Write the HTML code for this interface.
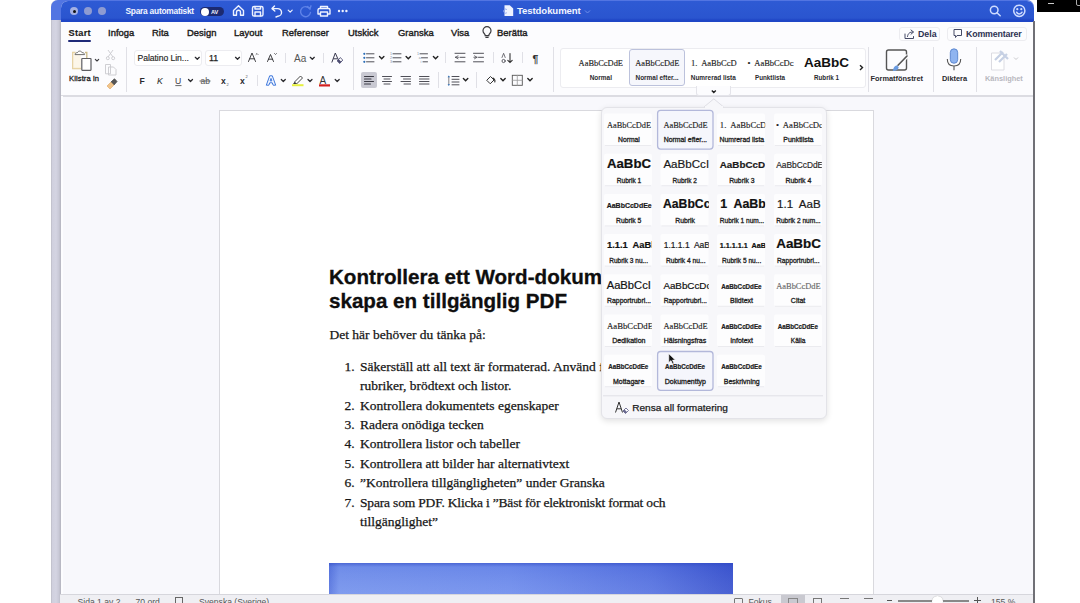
<!DOCTYPE html>
<html><head><meta charset="utf-8">
<style>
*{margin:0;padding:0;box-sizing:border-box}
html,body{width:1080px;height:603px;overflow:hidden;background:#fff;font-family:"Liberation Sans",sans-serif;position:relative}
.a{position:absolute}
svg{position:absolute;overflow:visible}
.tab{position:absolute;top:27.3px;font-size:9.4px;font-weight:normal;color:#1c1c20;-webkit-text-stroke:0.4px #1c1c20;letter-spacing:0.05px;white-space:nowrap}
.tl{position:absolute;width:8px;height:8px;border-radius:50%;background:#a4b0e3;top:7px}
.wt{color:#f2f5ff;font-weight:bold;position:absolute;white-space:nowrap}
.sep{position:absolute;width:1px;background:#e0e0e6}
.t{position:absolute;white-space:nowrap}
</style></head>
<body>
<!-- back window strip -->
<div class="a" style="left:51px;top:0;width:10px;height:603px;background:linear-gradient(90deg,#bcbcc6 0,#d0d0de 1.5px,#d4d4e2 5px,#c8c8d6 8px,#b4b4be 10px);border-radius:6px 0 0 0"></div>
<div class="a" style="left:51px;top:0;width:983px;height:20px;background:#5275e2;border-radius:7px 7px 0 0"></div>

<!-- black bar -->
<div class="a" style="left:1037px;top:0;width:43px;height:12px;background:#000">
  <div class="a" style="left:11px;top:3px;width:6px;height:1px;background:#ccc"></div>
  <div class="a" style="left:38.5px;top:-2px;width:8px;height:8px;border:1px solid #aaa;border-radius:2px"></div>
</div>
<!-- main window bg -->
<div class="a" style="left:61px;top:1px;width:973px;height:602px;background:#f8f8fc;border-radius:7px 7px 0 0;overflow:hidden">
  <div class="a" style="left:0;top:0;width:974px;height:21px;background:linear-gradient(180deg,#2e5ad4 0,#2a55cf 17px,#1f46c6 19px,#1f46c6 21px)"></div>
  <div class="a" style="left:0;top:20.5px;width:974px;height:75.5px;background:#fcfcfe;border-bottom:2px solid #dcdce2"></div>
</div>
<div class="a" style="left:1033px;top:21px;width:2px;height:582px;background:#707076"></div>
<div class="a" style="left:61px;top:96px;width:2px;height:507px;background:#fdfdff"></div>

<!-- title bar -->
<div class="tl" style="left:70px;"><div class="a" style="left:2.5px;top:2.5px;width:3px;height:3px;border-radius:50%;background:#111"></div></div>
<div class="tl" style="left:84px;background:#8e9bd2"></div>
<div class="tl" style="left:98px;background:#8e9bd2"></div>
<div class="wt" style="left:125.5px;top:5.5px;font-size:8.4px;letter-spacing:-0.25px">Spara automatiskt</div>
<div class="a" style="left:200px;top:7px;width:24px;height:9px;border-radius:4.5px;background:#1c2a70"></div>
<div class="a" style="left:200.5px;top:7.5px;width:8px;height:8px;border-radius:50%;background:#fff"></div>
<div class="wt" style="left:211px;top:9px;font-size:5.6px">AV</div>
<svg width="1080" height="22" style="left:0;top:0" viewBox="0 0 1080 22">
 <g fill="none" stroke="#eef2ff" stroke-width="1.4" stroke-linecap="round" stroke-linejoin="round">
  <!-- home -->
  <path d="M233.5 10.5 L238.5 5.8 L243.5 10.5 V15.2 H240.5 V12.2 A2 2 0 0 0 236.5 12.2 V15.2 H233.5 Z"/>
  <!-- save -->
  <rect x="252.5" y="6.5" width="10.5" height="9.5" rx="1.6"/>
  <path d="M255 6.8 V9 H260.5 V6.8 M255 15.8 V12 H260.5 V15.8"/>
  <!-- undo -->
  <path d="M274.5 6 L272 8.6 L274.8 11 M272.3 8.6 H277.5 A3.8 3.8 0 0 1 278 16.2 L276 17"/>
  <path d="M288.2 10.2 L290.2 12.2 L292.2 10.2" stroke-width="1.2"/>
  <!-- print -->
  <path d="M320.5 8.5 V6.5 H327.5 V8.5 M319.8 14 H318 V9.8 A1.5 1.5 0 0 1 319.5 8.5 H328.5 A1.5 1.5 0 0 1 330 10 V14 H328.2 M320.5 12 H327.5 V16 H320.5 Z"/>
 </g>
 <!-- redo faded -->
 <g fill="none" stroke="#5e82e8" stroke-width="1.4" stroke-linecap="round">
  <path d="M309.8 9 A5 5 0 1 0 310.5 12.5"/>
  <path d="M307.5 6.5 L310 8.8 L311 5.8"/>
 </g>
 <g fill="#eef2ff">
  <circle cx="339" cy="11" r="1.2"/><circle cx="342.7" cy="11" r="1.2"/><circle cx="346.4" cy="11" r="1.2"/>
 </g>
 <!-- doc icon -->
 <path d="M504.5 5.2 H509.8 L513.2 8.6 V16 H504.5 Z" fill="#eef2ff"/>
 <path d="M506.8 9.5 A2 2 0 1 0 506.8 12.8" fill="none" stroke="#8ea6ef" stroke-width="1"/>
 <path d="M585 10.5 L587.5 13 L590 10.5" fill="none" stroke="#6f8fea" stroke-width="1"/>
 <!-- search -->
 <g fill="none" stroke="#cfdcff" stroke-width="1.5" stroke-linecap="round">
  <circle cx="994.2" cy="10" r="3.8"/>
  <path d="M997 12.8 L1000.2 15.8"/>
  <circle cx="1019.3" cy="10.8" r="5.6"/>
  <path d="M1016.6 12.2 A3 3 0 0 0 1022 12.2"/>
 </g>
 <circle cx="1017.3" cy="9.2" r="1.1" fill="#cfdcff"/><circle cx="1021.3" cy="9.2" r="1.1" fill="#cfdcff"/>
</svg>
<div class="wt" style="left:517px;top:5px;font-size:9.6px;letter-spacing:-0.1px">Testdokument</div>

<!-- tabs -->
<div class="tab" style="left:68.5px;top:27.5px;font-size:9.2px;font-weight:bold;-webkit-text-stroke:0.15px #1c1c20;letter-spacing:0.3px">Start</div>
<div class="a" style="left:68px;top:40px;width:23px;height:2px;background:#1f2a78;border-radius:1px"></div>
<div class="tab" style="left:108px">Infoga</div>
<div class="tab" style="left:152px">Rita</div>
<div class="tab" style="left:187px">Design</div>
<div class="tab" style="left:234px">Layout</div>
<div class="tab" style="left:282px">Referenser</div>
<div class="tab" style="left:348px">Utskick</div>
<div class="tab" style="left:398px">Granska</div>
<div class="tab" style="left:451px">Visa</div>
<div class="tab" style="left:497px">Berätta</div>
<svg width="12" height="14" style="left:481px;top:25px" viewBox="0 0 12 14"><path d="M3.2 8.5 A4 4 0 1 1 8.8 8.5 C8 9.3 7.8 10 7.8 10.6 H4.2 C4.2 10 4 9.3 3.2 8.5 Z M4.4 12.3 H7.6" fill="none" stroke="#3a3a3e" stroke-width="1.2"/></svg>

<!-- Dela / Kommentarer -->
<div class="a" style="left:899px;top:27px;width:41px;height:14px;border:1px solid #ececf0;border-radius:3px"></div>
<svg width="12" height="12" style="left:904px;top:28px" viewBox="0 0 12 12"><path d="M1 6 V10.5 H9.5 V8.5 M3.5 8.5 C4 5 6 4 9 4 M7 2 L9.5 4 L7 6.2" fill="none" stroke="#454a66" stroke-width="1" stroke-linecap="round" stroke-linejoin="round"/></svg>
<div class="t" style="left:918px;top:29px;font-size:8.8px;font-weight:bold;color:#2d3252">Dela</div>
<div class="a" style="left:947px;top:27px;width:80px;height:14px;border:1px solid #ececf0;border-radius:3px"></div>
<svg width="12" height="12" style="left:953px;top:28px" viewBox="0 0 12 12"><path d="M1 1.5 H8.5 V7.5 H4 L2.5 9.5 V7.5 H1 Z" fill="none" stroke="#454a66" stroke-width="1" stroke-linejoin="round"/></svg>
<div class="t" style="left:966px;top:29px;font-size:8.8px;font-weight:bold;color:#2d3252;letter-spacing:-0.15px">Kommentarer</div>
<!-- ribbon separators -->
<div class="sep" style="left:126px;top:47px;height:45px"></div>
<div class="sep" style="left:353px;top:47px;height:43px"></div>
<div class="sep" style="left:553px;top:47px;height:45px"></div>
<div class="sep" style="left:285px;top:53px;height:10px"></div>
<div class="sep" style="left:323px;top:53px;height:10px"></div>
<div class="sep" style="left:257px;top:75px;height:11px"></div>
<div class="sep" style="left:445px;top:52px;height:11px"></div>
<div class="sep" style="left:493px;top:52px;height:11px"></div>
<div class="sep" style="left:522px;top:52px;height:11px"></div>
<div class="sep" style="left:438px;top:72px;height:16px"></div>
<div class="sep" style="left:476px;top:72px;height:16px"></div>

<div class="t" style="left:69px;top:74px;font-size:7.6px;color:#1e1e22;-webkit-text-stroke:0.3px #1e1e22;letter-spacing:0.1px">Klistra in</div>

<!-- font boxes -->
<div class="a" style="left:134px;top:50px;width:68px;height:16px;background:#fff;border:1px solid #ececf0;border-radius:3px"></div>
<div class="t" style="left:137.5px;top:53px;font-size:8.6px;color:#1e1e22;letter-spacing:-0.05px;-webkit-text-stroke:0.15px #1e1e22">Palatino Lin...</div>
<div class="a" style="left:205px;top:50px;width:37px;height:16px;background:#fff;border:1px solid #ececf0;border-radius:3px"></div>
<div class="t" style="left:209px;top:53px;font-size:8.8px;color:#1e1e22;-webkit-text-stroke:0.25px #1e1e22">11</div>

<div class="a" style="left:361px;top:72px;width:16px;height:16px;background:#c9c9d2;border-radius:2px"></div>

<svg width="1080" height="100" style="left:0;top:0" viewBox="0 0 1080 100">
 <!-- clipboard -->
 <path d="M75.5 52.5 H72.8 V68.5 H81" fill="none" stroke="#e0c890" stroke-width="1.3"/>
 <path d="M85 52.5 H86.8 V58" fill="none" stroke="#cbb985" stroke-width="1.3"/>
 <rect x="72.8" y="52.5" width="8" height="16" fill="#fbf2da" opacity="0.6"/>
 <path d="M75 54.6 C75 53 76.5 52.6 77.5 52.6 C78 50.6 81.5 50.6 82 52.6 C83 52.6 84.6 53 84.6 54.6 Z" fill="#fff" stroke="#707070" stroke-width="1"/>
 <rect x="81.8" y="58.5" width="9.2" height="11.8" fill="#fff" stroke="#5e5e62" stroke-width="1.2" rx="0.5"/>
 <g fill="none" stroke="#3a3a3e" stroke-width="1.1" stroke-linecap="round" stroke-linejoin="round">
  <path d="M95.3 59.3 L97 61 L98.7 59.3"/>
  <path d="M138 79 V82 M138 83 V83" stroke="none"/>
 </g>
 <!-- scissors disabled -->
 <g fill="none" stroke="#c9c9ce" stroke-width="0.9">
  <path d="M108 50 L113 57 M113 50 L108 57"/>
  <circle cx="107.8" cy="58.2" r="1.5"/><circle cx="113.2" cy="58.2" r="1.5"/>
  <path d="M105.5 64.5 H110.5 V73.8 H105.5 Z M108.5 67 H113.5 L116 69.5 V75 H108.5 Z" fill="#fcfcfe"/>
 </g>
 <!-- format painter -->
 <path d="M107 86 L111 82 L114 85 L110 89 Z" fill="#f0c48a" stroke="#e6b47a" stroke-width="0.8"/>
 <path d="M111 82 L114.5 78.8 L117 81.5 L114 85" fill="#555" stroke="#444" stroke-width="0.8"/>

 <g fill="none" stroke="#2a2a2e" stroke-width="1.25" stroke-linecap="round" stroke-linejoin="round">
  <!-- font chevrons -->
  <path d="M195.3 57.3 L197.3 59.3 L199.3 57.3"/>
  <path d="M235.5 57.3 L237.5 59.3 L239.5 57.3"/>
  <path d="M310.3 57.3 L312.3 59.3 L314.3 57.3"/>
  <!-- grow/shrink -->
  <path d="M248.5 61.5 L252 53 L255.5 61.5 M249.7 58.8 H254.3" stroke-width="0.9"/>
  <path d="M256 54.5 L257 53.5 L258 54.5" stroke-width="0.7"/>
  <path d="M267.5 61.5 L270.5 54.5 L273.5 61.5 M268.5 59.2 H272.5" stroke-width="0.9"/>
  <path d="M274.5 53.5 L275.5 54.5 L276.5 53.5" stroke-width="0.7"/>
  <!-- underline chevrons etc row2 -->
  <path d="M188.5 79.5 L190.5 81.5 L192.5 79.5"/>
  <path d="M281.3 79.5 L283.3 81.5 L285.3 79.5"/>
  <path d="M308 79.5 L310 81.5 L312 79.5"/>
  <path d="M335.2 79.5 L337.2 81.5 L339.2 79.5"/>
 </g>
 <!-- Aa -->
 <text x="294" y="62" font-family="Liberation Sans" font-size="10" fill="#555">Aa</text>
 <!-- clear formatting -->
 <path d="M331.8 62.5 L335.3 53 L338.6 60.5 M333.2 58.8 H337.2" fill="none" stroke="#3a3a50" stroke-width="1"/>
 <path d="M337.2 61 L340.2 57.6 L342.8 60 L339.8 63.4 Z" fill="#fff" stroke="#4a4a70" stroke-width="0.9"/>
 <path d="M337.2 61 L338.7 59.3 L341.3 61.7 L339.8 63.4 Z" fill="#4a4a70"/>
 <!-- F K U ab x x -->
 <text x="139.5" y="84" font-family="Liberation Sans" font-size="8.6" font-weight="bold" fill="#2a2a2e">F</text>
 <text x="157" y="84" font-family="Liberation Sans" font-size="8.6" font-style="italic" fill="#222">K</text>
 <text x="175" y="83.5" font-family="Liberation Sans" font-size="8.6" fill="#3a3a3e">U</text>
 <path d="M175.3 85.6 H181.5" stroke="#555" stroke-width="0.9"/>
 <text x="200.5" y="84" font-family="Liberation Sans" font-size="8.4" fill="#555">ab</text>
 <path d="M199.5 81 H210.5" stroke="#555" stroke-width="0.9"/>
 <text x="221" y="84" font-family="Liberation Sans" font-size="8.6" font-weight="bold" fill="#2a2a2e">x</text>
 <text x="226.5" y="86" font-family="Liberation Sans" font-size="4" fill="#555">2</text>
 <text x="240" y="84" font-family="Liberation Sans" font-size="8.6" font-weight="bold" fill="#2a2a2e">x</text>
 <text x="245.5" y="78" font-family="Liberation Sans" font-size="4" fill="#555">2</text>
 <!-- text effects A -->
 <path d="M266.3 85.2 L269.7 75.8 H272.3 L275.7 85.2 H273.1 L272.3 82.8 H269.7 L268.9 85.2 Z M270.2 80.9 H271.8 L271 78.4 Z" fill="#f2f6ff" fill-rule="evenodd" stroke="#3f78dc" stroke-width="1"/>
 <!-- highlighter -->
 <path d="M294.5 82 L300.5 76 L302.5 78 L296.5 84 Z" fill="#fff" stroke="#333" stroke-width="0.9"/>
 <path d="M294.5 82 L293 84 H296.5" fill="#333"/>
 <rect x="292" y="84.2" width="11.5" height="2" fill="#e6f040"/>
 <!-- font colour -->
 <text x="319.5" y="83.5" font-family="Liberation Sans" font-size="10" fill="#333">A</text>
 <rect x="319" y="84.3" width="11" height="2.2" fill="#d32020"/>
</svg>
<!-- paragraph group -->
<svg width="1080" height="100" style="left:0;top:0" viewBox="0 0 1080 100">
 <g fill="none" stroke="#505058" stroke-width="1" stroke-linecap="round">
  <!-- bullets lines -->
  <path d="M366.5 53.8 H374 M366.5 57.8 H374 M366.5 61.8 H374"/>
  <path d="M393 53.8 H401 M393 57.8 H401 M393 61.8 H401"/>
  <path d="M420 53.8 H427.5 M421.5 57.8 H427.5 M423 61.8 H427.5"/>
  <path d="M379.5 56.6 L381.7 58.8 L383.9 56.6" stroke="#222" stroke-width="1.4"/>
  <path d="M406.1 56.6 L408.3 58.8 L410.5 56.6" stroke="#222" stroke-width="1.4"/>
  <path d="M433.4 56.6 L435.6 58.8 L437.8 56.6" stroke="#222" stroke-width="1.4"/>
  <path d="M463.4 78.5 L465.6 80.7 L467.8 78.5" stroke="#222" stroke-width="1.4"/>
  <path d="M500.8 78.5 L503 80.7 L505.2 78.5" stroke="#222" stroke-width="1.4"/>
  <path d="M527.8 78.5 L530 80.7 L532.2 78.5" stroke="#222" stroke-width="1.4"/>
  <!-- indents -->
  <path d="M455 53.3 H465 M460 57.3 H465 M455 61.8 H465" />
  <path d="M455.5 57.3 L458 55.8 M455.5 57.3 L458 58.8 M455.5 57.3 H458.5" stroke-width="0.8"/>
  <path d="M473.5 53.3 H483.5 M478.5 57.3 H483.5 M473.5 61.8 H483.5" />
  <path d="M477 57.3 L474.5 55.8 M477 57.3 L474.5 58.8 M473.8 57.3 H476.5" stroke-width="0.8"/>
  <!-- sort -->
  <path d="M510 53.5 V62.5 M507.8 60.3 L510 62.5 L512.2 60.3" stroke="#333" stroke-width="1.1"/>
  <circle cx="503.6" cy="61" r="1.6" stroke-width="0.9"/>
  <path d="M502 57.5 L503.6 53.3 L505.2 57.5" stroke-width="0.8"/>
  <!-- align -->
  <path d="M364.5 76.5 H373.5 M364.5 79 H371 M364.5 81.5 H373.5 M364.5 84 H370.5" stroke="#3a3a44" stroke-width="1.1"/>
  <path d="M382.5 76.5 H391.5 M384 79 H390 M382.5 81.5 H391.5 M384 84 H390"/>
  <path d="M401 76.5 H410.5 M403.5 79 H410.5 M401 81.5 H410.5 M404 84 H410.5"/>
  <path d="M419.5 76.5 H429 M419.5 79 H429 M419.5 81.5 H429 M419.5 84 H429"/>
  <!-- line spacing -->
  <path d="M452 76.5 H459 M452 79.3 H459 M452 82 H459 M452 84.8 H459"/>
  <path d="M448.8 76.8 V84.6" stroke-width="0.7"/>
  <!-- borders -->
  <rect x="512.3" y="75.3" width="10" height="10" stroke="#555" stroke-width="0.9"/>
  <path d="M517.3 75.3 V85.3 M512.3 80.3 H522.3" stroke="#999" stroke-width="0.8"/>
  <!-- shading -->
  <path d="M487 80 L490.5 76.5 L494 80 L490.5 83.5 Z" stroke="#333"/>
  <path d="M493 78 C494.5 79 495.3 80.5 494.8 82" stroke="#333" stroke-width="1.1"/>
 </g>
 <g fill="#2d6fb8">
  <circle cx="364.3" cy="53.8" r="1.1"/><circle cx="364.3" cy="57.8" r="1.1"/><circle cx="364.3" cy="61.8" r="1.1"/>
 </g>
 <g fill="#7a8aa0" font-family="Liberation Sans" font-size="3.6">
  <text x="390" y="55.3">1</text><text x="390" y="59.3">2</text><text x="390" y="63.3">3</text>
  <text x="417" y="55.3">1</text><text x="418.8" y="59.3">a</text><text x="420.5" y="63.3">i</text>
 </g>
 <path d="M448.8 75.5 L447.6 77.3 H450 Z M448.8 86 L447.6 84.2 H450 Z" fill="#2d6fb8"/>
 <!-- pilcrow -->
 <text x="532.5" y="62.5" font-family="Liberation Sans" font-size="10.5" font-weight="bold" fill="#333">¶</text>
 <!-- styles gallery arrow -->
 
 <!-- Formatfönstret -->
 <rect x="886.5" y="50" width="20" height="20" rx="2" fill="none" stroke="#555" stroke-width="1.4"/>
 <path d="M907.5 55.5 L896 67" stroke="#fcfcfe" stroke-width="4"/>
 <path d="M907 56 L898 65.3" stroke="#555" stroke-width="1.6" stroke-linecap="round"/>
 <path d="M893 71 C893 68 894.5 65.5 897.2 65.5 L898.6 67 C898.6 69.5 896 71 893 71 Z" fill="#6a9be0"/>
 <!-- Diktera mic -->
 <rect x="950.3" y="48.8" width="7.4" height="14.5" rx="3.7" fill="#8fb4f0" stroke="#4a78c8" stroke-width="0.8"/>
 <path d="M947.3 59 C947.3 63.5 950 66 954 66 C958 66 960.7 63.5 960.7 59 M954 66 V70.2" fill="none" stroke="#555" stroke-width="1.1"/>
 <!-- Känslighet -->
 <path d="M991.5 53 H1001 L1004 56 V70 H991.5 Z" fill="#fff" stroke="#dcdce2" stroke-width="1"/>
 <path d="M995 60 L1003 52 M999 62 L1007 54 M1000 51 L1008 59" stroke="#c6d0e4" stroke-width="2.2"/>
 <path d="M1014 57.5 L1016 59.5 L1018 57.5" fill="none" stroke="#c8c8cc" stroke-width="1"/>
</svg>
<div class="t" style="left:870.5px;top:74px;font-size:7.4px;font-weight:bold;color:#2a2a2e">Formatfönstret</div>
<div class="t" style="left:942px;top:74px;font-size:7.4px;font-weight:bold;color:#2a2a2e">Diktera</div>
<div class="t" style="left:985px;top:74px;font-size:7.4px;font-weight:bold;color:#b8b8be">Känslighet</div>
<div class="sep" style="left:868px;top:47px;height:45px"></div>
<div class="sep" style="left:933px;top:47px;height:45px"></div>
<div class="sep" style="left:976px;top:47px;height:45px"></div>

<!-- styles gallery -->
<div class="a" style="left:560px;top:47.5px;width:306px;height:40px;background:#fff;border:1px solid #ececf0;border-radius:3px"></div>
<div class="a" style="left:629px;top:48.5px;width:56px;height:37.5px;background:#f6f7fc;border:1px solid #bcc2dc;border-radius:3px"></div>
<svg width="1080" height="100" style="left:0;top:0" viewBox="0 0 1080 100">
 <g font-family="Liberation Serif" font-size="8.8" fill="#1e1e1e" stroke="#1e1e1e" stroke-width="0.15">
  <text x="578.6" y="65.5" textLength="44.4" lengthAdjust="spacingAndGlyphs">AaBbCcDdE</text>
  <text x="635.3" y="65.5" textLength="44" lengthAdjust="spacingAndGlyphs">AaBbCcDdE</text>
  <text x="691" y="65.5" textLength="45.7" lengthAdjust="spacingAndGlyphs" xml:space="preserve">1.  AaBbCcD</text>
  <text x="747.5" y="65.5" textLength="46" lengthAdjust="spacingAndGlyphs" xml:space="preserve">•  AaBbCcDc</text>
 </g>
 <text x="804" y="66.6" font-family="Liberation Sans" font-size="12.4" font-weight="bold" fill="#111" textLength="45" lengthAdjust="spacingAndGlyphs">AaBbC</text>
 <g font-family="Liberation Sans" font-size="7" font-weight="bold" fill="#2a2a2e">
  <text x="589.7" y="80" textLength="22.3" lengthAdjust="spacingAndGlyphs">Normal</text>
  <text x="635.5" y="80" textLength="43" lengthAdjust="spacingAndGlyphs">Normal efter...</text>
  <text x="690.8" y="80" textLength="45" lengthAdjust="spacingAndGlyphs">Numrerad lista</text>
  <text x="755" y="80" textLength="30" lengthAdjust="spacingAndGlyphs">Punktlista</text>
  <text x="814" y="80" textLength="25" lengthAdjust="spacingAndGlyphs">Rubrik 1</text>
 </g>
 <path d="M860 65.2 L862.5 67.6 L860 70" fill="none" stroke="#222" stroke-width="1.4"/>
</svg>
<div class="a" style="left:696px;top:86px;width:35px;height:10px;background:#fcfcfe;border:1px solid #e4e4ea;border-top:none;border-radius:0 0 3px 3px"></div>
<svg width="10" height="8" style="left:709px;top:88px" viewBox="0 0 10 8"><path d="M2.8 2.5 L4.8 4.5 L6.8 2.5" fill="none" stroke="#222" stroke-width="1.4"/></svg>
<!-- document page -->
<div class="a" style="left:219px;top:110px;width:655px;height:500px;background:#fff;border:1px solid #d9d9de;border-bottom:none"></div>
<svg width="1080" height="603" style="left:0;top:0" viewBox="0 0 1080 603">
 <g font-family="Liberation Sans" font-weight="bold" font-size="20.6" fill="#0e0e0e" stroke="#0e0e0e" stroke-width="0.3">
  <text x="329" y="284.4">Kontrollera ett Word-dokument och</text>
  <text x="329" y="308.1">skapa en tillgänglig PDF</text>
 </g>
 <g font-family="Liberation Serif" font-size="13.5" fill="#161616" stroke="#161616" stroke-width="0.25">
  <text x="329.5" y="338.5">Det här behöver du tänka på:</text>
    <text x="344.5" y="370.7">1.</text>
  <text x="360" y="370.7">Säkerställ att all text är formaterad. Använd formatmallar för</text>
  <text x="360" y="390.1">rubriker, brödtext och listor.</text>
  <text x="344.5" y="409.5">2.</text>
  <text x="360" y="409.5">Kontrollera dokumentets egenskaper</text>
  <text x="344.5" y="428.9">3.</text>
  <text x="360" y="428.9">Radera onödiga tecken</text>
  <text x="344.5" y="448.3">4.</text>
  <text x="360" y="448.3">Kontrollera listor och tabeller</text>
  <text x="344.5" y="467.7">5.</text>
  <text x="360" y="467.7">Kontrollera att bilder har alternativtext</text>
  <text x="344.5" y="487.1">6.</text>
  <text x="360" y="487.1">”Kontrollera tillgängligheten” under Granska</text>
  <text x="344.5" y="506.5">7.</text>
  <text x="360" y="506.5" textLength="305.5" lengthAdjust="spacing">Spara som PDF. Klicka i ”Bäst för elektroniskt format och</text>
  <text x="360" y="525.9">tillgänglighet”</text>
 </g>
 <defs>
  <linearGradient id="imgh" x1="0" y1="0" x2="1" y2="0">
   <stop offset="0" stop-color="#5a78e0"/><stop offset="0.025" stop-color="#7896ee"/><stop offset="0.45" stop-color="#7290ee"/><stop offset="0.8" stop-color="#5a76e2"/><stop offset="1" stop-color="#3d56cf"/>
  </linearGradient>
  <linearGradient id="imgv" x1="0" y1="0" x2="0" y2="1">
   <stop offset="0" stop-color="#2a44c0" stop-opacity="0.55"/><stop offset="0.1" stop-color="#2a44c0" stop-opacity="0.12"/><stop offset="1" stop-color="#ffffff" stop-opacity="0.08"/>
  </linearGradient>
 </defs>
 <rect x="329" y="563" width="404" height="40" fill="url(#imgh)"/>
 <rect x="329" y="563" width="404" height="40" fill="url(#imgv)"/>
</svg>
<!-- status bar -->
<div class="a" style="left:60px;top:594px;width:973px;height:9px;background:#efeff3;border-top:1px solid #d6d6dc"></div>
<!-- styles dropdown panel -->
<div class="a" style="left:601px;top:106.5px;width:225.5px;height:312px;background:#f7f7fa;border:1px solid #e3e3e8;border-radius:6px;box-shadow:0 2px 6px rgba(0,0,0,0.12)"></div>
<svg width="40" height="12" style="left:694px;top:97px" viewBox="0 0 40 12"><path d="M10 10 L19.8 1.8 L29.6 10" fill="#f7f7fa" stroke="#dfdfe5" stroke-width="1"/></svg>
<div class="a" style="left:705px;top:106px;width:18px;height:2px;background:#f7f7fa"></div>
<svg width="1080" height="603" style="left:0;top:0" viewBox="0 0 1080 603">
 <defs>
  <clipPath id="cc0"><rect x="604" y="100" width="47.8" height="300"/></clipPath>
  <clipPath id="cc1"><rect x="660" y="100" width="48.8" height="300"/></clipPath>
  <clipPath id="cc2"><rect x="717" y="100" width="48.2" height="300"/></clipPath>
  <clipPath id="cc3"><rect x="774" y="100" width="47.8" height="300"/></clipPath>
 </defs>
  <rect x="604" y="113.5" width="48" height="32" rx="2" fill="#fdfdfe"/>
  <path d="M605 145.5 H651" stroke="#ebebef" stroke-width="1"/>
  <rect x="660.5" y="113.5" width="48" height="32" rx="2" fill="#fdfdfe"/>
  <path d="M661.5 145.5 H707.5" stroke="#ebebef" stroke-width="1"/>
  <rect x="717" y="113.5" width="48" height="32" rx="2" fill="#fdfdfe"/>
  <path d="M718 145.5 H764" stroke="#ebebef" stroke-width="1"/>
  <rect x="774" y="113.5" width="48" height="32" rx="2" fill="#fdfdfe"/>
  <path d="M775 145.5 H821" stroke="#ebebef" stroke-width="1"/>
  <rect x="604" y="153.7" width="48" height="32" rx="2" fill="#fdfdfe"/>
  <path d="M605 185.7 H651" stroke="#ebebef" stroke-width="1"/>
  <rect x="660.5" y="153.7" width="48" height="32" rx="2" fill="#fdfdfe"/>
  <path d="M661.5 185.7 H707.5" stroke="#ebebef" stroke-width="1"/>
  <rect x="717" y="153.7" width="48" height="32" rx="2" fill="#fdfdfe"/>
  <path d="M718 185.7 H764" stroke="#ebebef" stroke-width="1"/>
  <rect x="774" y="153.7" width="48" height="32" rx="2" fill="#fdfdfe"/>
  <path d="M775 185.7 H821" stroke="#ebebef" stroke-width="1"/>
  <rect x="604" y="193.9" width="48" height="32" rx="2" fill="#fdfdfe"/>
  <path d="M605 225.9 H651" stroke="#ebebef" stroke-width="1"/>
  <rect x="660.5" y="193.9" width="48" height="32" rx="2" fill="#fdfdfe"/>
  <path d="M661.5 225.9 H707.5" stroke="#ebebef" stroke-width="1"/>
  <rect x="717" y="193.9" width="48" height="32" rx="2" fill="#fdfdfe"/>
  <path d="M718 225.9 H764" stroke="#ebebef" stroke-width="1"/>
  <rect x="774" y="193.9" width="48" height="32" rx="2" fill="#fdfdfe"/>
  <path d="M775 225.9 H821" stroke="#ebebef" stroke-width="1"/>
  <rect x="604" y="234.1" width="48" height="32" rx="2" fill="#fdfdfe"/>
  <path d="M605 266.1 H651" stroke="#ebebef" stroke-width="1"/>
  <rect x="660.5" y="234.1" width="48" height="32" rx="2" fill="#fdfdfe"/>
  <path d="M661.5 266.1 H707.5" stroke="#ebebef" stroke-width="1"/>
  <rect x="717" y="234.1" width="48" height="32" rx="2" fill="#fdfdfe"/>
  <path d="M718 266.1 H764" stroke="#ebebef" stroke-width="1"/>
  <rect x="774" y="234.1" width="48" height="32" rx="2" fill="#fdfdfe"/>
  <path d="M775 266.1 H821" stroke="#ebebef" stroke-width="1"/>
  <rect x="604" y="274.3" width="48" height="32" rx="2" fill="#fdfdfe"/>
  <path d="M605 306.3 H651" stroke="#ebebef" stroke-width="1"/>
  <rect x="660.5" y="274.3" width="48" height="32" rx="2" fill="#fdfdfe"/>
  <path d="M661.5 306.3 H707.5" stroke="#ebebef" stroke-width="1"/>
  <rect x="717" y="274.3" width="48" height="32" rx="2" fill="#fdfdfe"/>
  <path d="M718 306.3 H764" stroke="#ebebef" stroke-width="1"/>
  <rect x="774" y="274.3" width="48" height="32" rx="2" fill="#fdfdfe"/>
  <path d="M775 306.3 H821" stroke="#ebebef" stroke-width="1"/>
  <rect x="604" y="314.5" width="48" height="32" rx="2" fill="#fdfdfe"/>
  <path d="M605 346.5 H651" stroke="#ebebef" stroke-width="1"/>
  <rect x="660.5" y="314.5" width="48" height="32" rx="2" fill="#fdfdfe"/>
  <path d="M661.5 346.5 H707.5" stroke="#ebebef" stroke-width="1"/>
  <rect x="717" y="314.5" width="48" height="32" rx="2" fill="#fdfdfe"/>
  <path d="M718 346.5 H764" stroke="#ebebef" stroke-width="1"/>
  <rect x="774" y="314.5" width="48" height="32" rx="2" fill="#fdfdfe"/>
  <path d="M775 346.5 H821" stroke="#ebebef" stroke-width="1"/>
  <rect x="604" y="354.7" width="48" height="32" rx="2" fill="#fdfdfe"/>
  <path d="M605 386.7 H651" stroke="#ebebef" stroke-width="1"/>
  <rect x="660.5" y="354.7" width="48" height="32" rx="2" fill="#fdfdfe"/>
  <path d="M661.5 386.7 H707.5" stroke="#ebebef" stroke-width="1"/>
  <rect x="717" y="354.7" width="48" height="32" rx="2" fill="#fdfdfe"/>
  <path d="M718 386.7 H764" stroke="#ebebef" stroke-width="1"/>
  <rect x="657.6" y="110.3" width="55.4" height="38.8" rx="3" fill="#f5f6fc" stroke="#b3b8da" stroke-width="1.3"/>
  <rect x="657.6" y="351.5" width="55.4" height="38.8" rx="3" fill="#f5f6fc" stroke="#b3b8da" stroke-width="1.3"/>
  <text x="607" y="127.8" font-family="Liberation Serif" font-size="8.8" font-weight="normal" fill="#1e1e1e" stroke="#1e1e1e" stroke-width="0.15" textLength="44" lengthAdjust="spacingAndGlyphs" clip-path="url(#cc0)" xml:space="preserve">AaBbCcDdE</text>
  <text x="618" y="142.4" font-family="Liberation Sans" font-size="6.8" font-weight="normal" fill="#222" stroke="#222" stroke-width="0.3" textLength="21.8" lengthAdjust="spacingAndGlyphs">Normal</text>
  <text x="663.4" y="127.8" font-family="Liberation Serif" font-size="8.8" font-weight="normal" fill="#1e1e1e" stroke="#1e1e1e" stroke-width="0.15" textLength="44.3" lengthAdjust="spacingAndGlyphs" clip-path="url(#cc1)" xml:space="preserve">AaBbCcDdE</text>
  <text x="663.7" y="142.4" font-family="Liberation Sans" font-size="6.8" font-weight="normal" fill="#222" stroke="#222" stroke-width="0.3" textLength="43.3" lengthAdjust="spacingAndGlyphs">Normal efter...</text>
  <text x="719.8" y="127.8" font-family="Liberation Serif" font-size="8.8" font-weight="normal" fill="#1e1e1e" stroke="#1e1e1e" stroke-width="0.15" textLength="46.5" lengthAdjust="spacingAndGlyphs" clip-path="url(#cc2)" xml:space="preserve">1.  AaBbCcD</text>
  <text x="719.5" y="142.4" font-family="Liberation Sans" font-size="6.8" font-weight="normal" fill="#222" stroke="#222" stroke-width="0.3" textLength="44.7" lengthAdjust="spacingAndGlyphs">Numrerad lista</text>
  <text x="775.9" y="127.8" font-family="Liberation Serif" font-size="8.8" font-weight="normal" fill="#1e1e1e" stroke="#1e1e1e" stroke-width="0.15" textLength="47" lengthAdjust="spacingAndGlyphs" clip-path="url(#cc3)" xml:space="preserve">•  AaBbCcDc</text>
  <text x="783.3" y="142.4" font-family="Liberation Sans" font-size="6.8" font-weight="normal" fill="#222" stroke="#222" stroke-width="0.3" textLength="30.2" lengthAdjust="spacingAndGlyphs">Punktlista</text>
  <text x="607" y="168.0" font-family="Liberation Sans" font-size="12.4" font-weight="bold" fill="#111" stroke="#111" stroke-width="0.2" textLength="44" lengthAdjust="spacingAndGlyphs" clip-path="url(#cc0)" xml:space="preserve">AaBbC</text>
  <text x="616.7" y="182.6" font-family="Liberation Sans" font-size="6.8" font-weight="normal" fill="#222" stroke="#222" stroke-width="0.3" textLength="24.6" lengthAdjust="spacingAndGlyphs">Rubrik 1</text>
  <text x="663.4" y="168.0" font-family="Liberation Sans" font-size="11.6" font-weight="normal" fill="#1a1a1a" stroke="#1a1a1a" stroke-width="0.2" clip-path="url(#cc1)" xml:space="preserve">AaBbCcI</text>
  <text x="672.6" y="182.6" font-family="Liberation Sans" font-size="6.8" font-weight="normal" fill="#222" stroke="#222" stroke-width="0.3" textLength="24.4" lengthAdjust="spacingAndGlyphs">Rubrik 2</text>
  <text x="719.8" y="168.0" font-family="Liberation Sans" font-size="9.6" font-weight="bold" fill="#1a1a1a" stroke="#1a1a1a" stroke-width="0.2" textLength="45.2" lengthAdjust="spacingAndGlyphs" clip-path="url(#cc2)" xml:space="preserve">AaBbCcD</text>
  <text x="729.2" y="182.6" font-family="Liberation Sans" font-size="6.8" font-weight="normal" fill="#222" stroke="#222" stroke-width="0.3" textLength="25.3" lengthAdjust="spacingAndGlyphs">Rubrik 3</text>
  <text x="776.2" y="168.0" font-family="Liberation Sans" font-size="9.6" font-weight="normal" fill="#2a2a2a" stroke="#2a2a2a" stroke-width="0.2" textLength="47" lengthAdjust="spacingAndGlyphs" clip-path="url(#cc3)" xml:space="preserve">AaBbCcDdE</text>
  <text x="785.4" y="182.6" font-family="Liberation Sans" font-size="6.8" font-weight="normal" fill="#222" stroke="#222" stroke-width="0.3" textLength="25.9" lengthAdjust="spacingAndGlyphs">Rubrik 4</text>
  <text x="606.7" y="208.2" font-family="Liberation Sans" font-size="7" font-weight="bold" fill="#1a1a1a" stroke="#1a1a1a" stroke-width="0.2" textLength="45" lengthAdjust="spacingAndGlyphs" clip-path="url(#cc0)" xml:space="preserve">AaBbCcDdEe</text>
  <text x="616" y="222.8" font-family="Liberation Sans" font-size="6.8" font-weight="normal" fill="#222" stroke="#222" stroke-width="0.3" textLength="25.3" lengthAdjust="spacingAndGlyphs">Rubrik 5</text>
  <text x="663" y="208.2" font-family="Liberation Sans" font-size="12.2" font-weight="bold" fill="#111" stroke="#111" stroke-width="0.2" clip-path="url(#cc1)" xml:space="preserve">AaBbCc</text>
  <text x="675.3" y="222.8" font-family="Liberation Sans" font-size="6.8" font-weight="normal" fill="#222" stroke="#222" stroke-width="0.3" textLength="19.7" lengthAdjust="spacingAndGlyphs">Rubrik</text>
  <text x="720.2" y="208.2" font-family="Liberation Sans" font-size="12.4" font-weight="bold" fill="#111" stroke="#111" stroke-width="0.2" clip-path="url(#cc2)" xml:space="preserve">1  AaBbC</text>
  <text x="719.8" y="222.8" font-family="Liberation Sans" font-size="6.8" font-weight="normal" fill="#222" stroke="#222" stroke-width="0.3" textLength="44.4" lengthAdjust="spacingAndGlyphs">Rubrik 1 num...</text>
  <text x="777" y="208.2" font-family="Liberation Sans" font-size="10.6" font-weight="normal" fill="#1a1a1a" stroke="#1a1a1a" stroke-width="0.2" textLength="43.7" lengthAdjust="spacingAndGlyphs" clip-path="url(#cc3)" xml:space="preserve">1.1  AaB</text>
  <text x="776.2" y="222.8" font-family="Liberation Sans" font-size="6.8" font-weight="normal" fill="#222" stroke="#222" stroke-width="0.3" textLength="44.5" lengthAdjust="spacingAndGlyphs">Rubrik 2 num...</text>
  <text x="607" y="248.4" font-family="Liberation Sans" font-size="9.4" font-weight="bold" fill="#111" stroke="#111" stroke-width="0.2" textLength="50" lengthAdjust="spacingAndGlyphs" clip-path="url(#cc0)" xml:space="preserve">1.1.1  AaBb</text>
  <text x="609.2" y="263.0" font-family="Liberation Sans" font-size="6.8" font-weight="normal" fill="#222" stroke="#222" stroke-width="0.3" textLength="38.8" lengthAdjust="spacingAndGlyphs">Rubrik 3 nu...</text>
  <text x="663.7" y="248.4" font-family="Liberation Sans" font-size="9" font-weight="normal" fill="#1a1a1a" stroke="#1a1a1a" stroke-width="0.2" textLength="51" lengthAdjust="spacingAndGlyphs" clip-path="url(#cc1)" xml:space="preserve">1.1.1.1  AaBb</text>
  <text x="665.9" y="263.0" font-family="Liberation Sans" font-size="6.8" font-weight="normal" fill="#222" stroke="#222" stroke-width="0.3" textLength="39.6" lengthAdjust="spacingAndGlyphs">Rubrik 4 nu...</text>
  <text x="719.8" y="248.4" font-family="Liberation Sans" font-size="7.2" font-weight="bold" fill="#111" stroke="#111" stroke-width="0.2" clip-path="url(#cc2)" xml:space="preserve">1.1.1.1.1  AaBb</text>
  <text x="722" y="263.0" font-family="Liberation Sans" font-size="6.8" font-weight="normal" fill="#222" stroke="#222" stroke-width="0.3" textLength="39.3" lengthAdjust="spacingAndGlyphs">Rubrik 5 nu...</text>
  <text x="776.2" y="248.4" font-family="Liberation Sans" font-size="12.4" font-weight="bold" fill="#111" stroke="#111" stroke-width="0.2" textLength="44.8" lengthAdjust="spacingAndGlyphs" clip-path="url(#cc3)" xml:space="preserve">AaBbC</text>
  <text x="777" y="263.0" font-family="Liberation Sans" font-size="6.8" font-weight="normal" fill="#222" stroke="#222" stroke-width="0.3" textLength="42.5" lengthAdjust="spacingAndGlyphs">Rapportrubri...</text>
  <text x="606.7" y="288.6" font-family="Liberation Sans" font-size="11.2" font-weight="normal" fill="#111" stroke="#111" stroke-width="0.2" clip-path="url(#cc0)" xml:space="preserve">AaBbCcI</text>
  <text x="607" y="303.2" font-family="Liberation Sans" font-size="6.8" font-weight="normal" fill="#222" stroke="#222" stroke-width="0.3" textLength="44" lengthAdjust="spacingAndGlyphs">Rapportrubri...</text>
  <text x="663.4" y="288.6" font-family="Liberation Sans" font-size="9.8" font-weight="normal" fill="#111" stroke="#111" stroke-width="0.2" clip-path="url(#cc1)" xml:space="preserve">AaBbCcDc</text>
  <text x="663.7" y="303.2" font-family="Liberation Sans" font-size="6.8" font-weight="normal" fill="#222" stroke="#222" stroke-width="0.3" textLength="43.3" lengthAdjust="spacingAndGlyphs">Rapportrubri...</text>
  <text x="721.3" y="288.6" font-family="Liberation Sans" font-size="6.6" font-weight="bold" fill="#222" stroke="#222" stroke-width="0.2" textLength="40.3" lengthAdjust="spacingAndGlyphs" clip-path="url(#cc2)" xml:space="preserve">AaBbCcDdEe</text>
  <text x="730" y="303.2" font-family="Liberation Sans" font-size="6.8" font-weight="normal" fill="#222" stroke="#222" stroke-width="0.3" textLength="23" lengthAdjust="spacingAndGlyphs">Bildtext</text>
  <text x="776.2" y="288.6" font-family="Liberation Serif" font-size="8.8" font-weight="normal" fill="#6a6a6a" stroke="#6a6a6a" stroke-width="0.15" textLength="44.5" lengthAdjust="spacingAndGlyphs" clip-path="url(#cc3)" xml:space="preserve">AaBbCcDdE</text>
  <text x="790.8" y="303.2" font-family="Liberation Sans" font-size="6.8" font-weight="normal" fill="#222" stroke="#222" stroke-width="0.3" textLength="14.5" lengthAdjust="spacingAndGlyphs">Citat</text>
  <text x="607" y="328.8" font-family="Liberation Serif" font-size="8.8" font-weight="normal" fill="#1e1e1e" stroke="#1e1e1e" stroke-width="0.15" textLength="46" lengthAdjust="spacingAndGlyphs" clip-path="url(#cc0)" xml:space="preserve">AaBbCcDdE</text>
  <text x="612.2" y="343.4" font-family="Liberation Sans" font-size="6.8" font-weight="normal" fill="#222" stroke="#222" stroke-width="0.3" textLength="33.3" lengthAdjust="spacingAndGlyphs">Dedikation</text>
  <text x="663.4" y="328.8" font-family="Liberation Serif" font-size="8.8" font-weight="normal" fill="#1e1e1e" stroke="#1e1e1e" stroke-width="0.15" textLength="44.3" lengthAdjust="spacingAndGlyphs" clip-path="url(#cc1)" xml:space="preserve">AaBbCcDdE</text>
  <text x="663.7" y="343.4" font-family="Liberation Sans" font-size="6.8" font-weight="normal" fill="#222" stroke="#222" stroke-width="0.3" textLength="42.5" lengthAdjust="spacingAndGlyphs">Hälsningsfras</text>
  <text x="721.3" y="328.8" font-family="Liberation Sans" font-size="6.6" font-weight="bold" fill="#222" stroke="#222" stroke-width="0.2" textLength="40.3" lengthAdjust="spacingAndGlyphs" clip-path="url(#cc2)" xml:space="preserve">AaBbCcDdEe</text>
  <text x="730.2" y="343.4" font-family="Liberation Sans" font-size="6.8" font-weight="normal" fill="#222" stroke="#222" stroke-width="0.3" textLength="22.8" lengthAdjust="spacingAndGlyphs">Infotext</text>
  <text x="777.7" y="328.8" font-family="Liberation Sans" font-size="6.6" font-weight="bold" fill="#222" stroke="#222" stroke-width="0.2" textLength="40.3" lengthAdjust="spacingAndGlyphs" clip-path="url(#cc3)" xml:space="preserve">AaBbCcDdEe</text>
  <text x="790.8" y="343.4" font-family="Liberation Sans" font-size="6.8" font-weight="normal" fill="#222" stroke="#222" stroke-width="0.3" textLength="14.5" lengthAdjust="spacingAndGlyphs">Källa</text>
  <text x="608.3" y="369.0" font-family="Liberation Sans" font-size="6.6" font-weight="bold" fill="#222" stroke="#222" stroke-width="0.2" textLength="40" lengthAdjust="spacingAndGlyphs" clip-path="url(#cc0)" xml:space="preserve">AaBbCcDdEe</text>
  <text x="613" y="383.6" font-family="Liberation Sans" font-size="6.8" font-weight="normal" fill="#222" stroke="#222" stroke-width="0.3" textLength="31.3" lengthAdjust="spacingAndGlyphs">Mottagare</text>
  <text x="665" y="369.0" font-family="Liberation Sans" font-size="6.6" font-weight="bold" fill="#222" stroke="#222" stroke-width="0.2" textLength="40" lengthAdjust="spacingAndGlyphs" clip-path="url(#cc1)" xml:space="preserve">AaBbCcDdEe</text>
  <text x="664.7" y="383.6" font-family="Liberation Sans" font-size="6.8" font-weight="normal" fill="#222" stroke="#222" stroke-width="0.3" textLength="41.3" lengthAdjust="spacingAndGlyphs">Dokumenttyp</text>
  <text x="721.3" y="369.0" font-family="Liberation Sans" font-size="6.6" font-weight="bold" fill="#222" stroke="#222" stroke-width="0.2" textLength="40.4" lengthAdjust="spacingAndGlyphs" clip-path="url(#cc2)" xml:space="preserve">AaBbCcDdEe</text>
  <text x="723.8" y="383.6" font-family="Liberation Sans" font-size="6.8" font-weight="normal" fill="#222" stroke="#222" stroke-width="0.3" textLength="35.9" lengthAdjust="spacingAndGlyphs">Beskrivning</text>
 <path d="M603 395.8 H823" stroke="#e0e0e6" stroke-width="1"/>
 <text x="632.2" y="411.3" font-family="Liberation Sans" font-size="9.8" fill="#1a1a1a" stroke="#1a1a1a" stroke-width="0.25" textLength="95.8" lengthAdjust="spacingAndGlyphs">Rensa all formatering</text>
</svg>
<svg width="16" height="14" style="left:614px;top:400px" viewBox="0 0 16 14"><path d="M1.5 12.5 L5 2 L8.5 12.5 M2.8 8.8 H7.2" fill="none" stroke="#333" stroke-width="1"/><path d="M9 11 L12 8 L14.5 10.5 L11.5 13.5 Z" fill="#fff" stroke="#6a6a90" stroke-width="0.9"/><path d="M9 11 L10.5 9.5 L13 12 L11.5 13.5 Z" fill="#6a6a90"/></svg>
<svg width="12" height="14" style="left:668px;top:353px" viewBox="0 0 12 14"><path d="M0.8 0.8 L0.8 9.5 L3 7.6 L4.6 11 L6 10.4 L4.5 7.1 L7.3 7.1 Z" fill="#111" stroke="#fff" stroke-width="0.6"/></svg><div class="t" style="left:77.5px;top:597px;font-size:8.6px;color:#555">Sida 1 av 2</div>
<div class="t" style="left:135.5px;top:597px;font-size:8.6px;color:#555">70 ord</div>
<div class="a" style="left:175px;top:597px;width:8px;height:8px;border:1px solid #666"></div>
<div class="t" style="left:199px;top:597px;font-size:8.6px;color:#555">Svenska (Sverige)</div>
<div class="a" style="left:734px;top:598px;width:9px;height:8px;border:1px solid #777;border-radius:1px"></div>
<div class="t" style="left:748.5px;top:597px;font-size:8.6px;color:#555">Fokus</div>
<div class="a" style="left:781px;top:595px;width:24px;height:8px;background:#c9c9d0"></div>
<div class="a" style="left:788px;top:598px;width:10px;height:6px;border:1px solid #888"></div>
<div class="a" style="left:813px;top:598px;width:9px;height:6px;border:1px solid #777"></div>
<div class="a" style="left:840px;top:598px;width:9px;height:1px;background:#777"></div>
<div class="a" style="left:864px;top:598px;width:9px;height:1px;background:#777"></div>
<div class="a" style="left:887px;top:600px;width:5px;height:1.2px;background:#555"></div>
<div class="a" style="left:898px;top:600px;width:71px;height:2px;background:#888"></div>
<div class="a" style="left:932px;top:596px;width:11px;height:11px;border-radius:50%;background:#fff;box-shadow:0 0 1px #999"></div>
<div class="a" style="left:974px;top:600px;width:7px;height:1.2px;background:#555"></div>
<div class="a" style="left:977px;top:597px;width:1.2px;height:7px;background:#555"></div>
<div class="t" style="left:991px;top:597px;font-size:8.6px;color:#555">155 %</div>
</body></html>
